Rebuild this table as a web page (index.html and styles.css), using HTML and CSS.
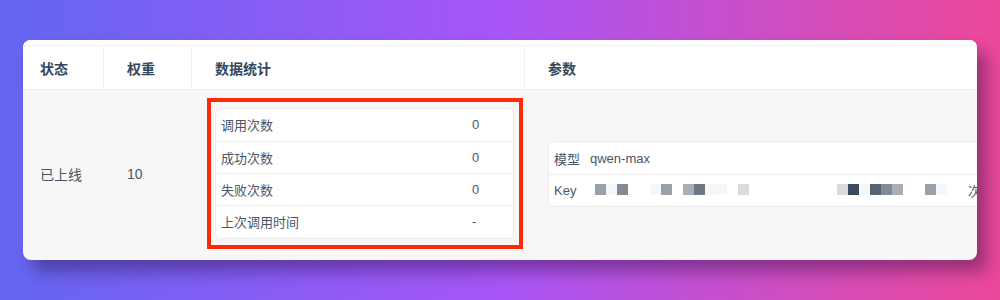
FILE: index.html
```html
<!DOCTYPE html>
<html lang="zh">
<head>
<meta charset="utf-8">
<link rel="stylesheet" href="styles.css">
</head>
<body>
<div class="card">
  <div class="thead">
    <div class="th sep">状态</div>
    <div class="th sep">权重</div>
    <div class="th sep">数据统计</div>
    <div class="th">参数</div>
  </div>
  <div class="trow">
    <div class="td plain">已上线</div>
    <div class="td plain">10</div>
    <div class="td">
      <div class="stats-wrap">
        <div class="stats">
          <div class="srow"><span class="lbl">调用次数</span><span class="val">0</span></div>
          <div class="srow"><span class="lbl">成功次数</span><span class="val">0</span></div>
          <div class="srow"><span class="lbl">失败次数</span><span class="val">0</span></div>
          <div class="srow"><span class="lbl">上次调用时间</span><span class="val">-</span></div>
        </div>
        <div class="highlight"></div>
      </div>
    </div>
    <div class="td">
      <div class="params">
        <div class="prow"><span class="plbl">模型</span><span class="pval">qwen-max</span></div>
        <div class="prow"><span class="plbl">Key</span>
          <span class="mosaic">
            <i class="c3"></i><i class="c1"></i><i class="c4"></i><i></i><i></i><i class="c1"></i><i class="c3"></i><i></i><i class="c2"></i><i class="c5"></i><i class="c1"></i><i class="c1"></i><i></i><i class="c6"></i><i></i><i></i><i></i><i></i><i></i><i></i><i></i><i></i><i class="c6"></i><i class="c8"></i><i class="c1"></i><i class="c7"></i><i class="c4"></i><i class="c2"></i><i></i><i></i><i class="c3"></i><i class="c1"></i>
          </span>
          <span class="tail">次</span>
        </div>
      </div>
    </div>
  </div>
</div>
</body>
</html>
```

FILE: styles.css
```css
* { box-sizing: border-box; }
html, body { margin: 0; height: 100%; }
body {
  width: 1000px;
  height: 300px;
  padding: 40px 23px;
  background: linear-gradient(90deg, #6366f1 0%, #a855f7 50%, #ec4899 100%);
  font-family: "Liberation Sans", "Noto Sans CJK SC", sans-serif;
  color: #4a5568;
  overflow: hidden;
}
.card {
  width: 954px;
  height: 220px;
  background: #f7f7f7;
  border-radius: 8px;
  overflow: hidden;
  box-shadow: 10px 12px 16px rgba(40, 12, 60, 0.4);
}
.thead {
  display: grid;
  grid-template-columns: 87px 88px 333px 1fr;
  height: 50px;
  background: #fff;
  border-top: 5px solid #fff;
  border-bottom: 1px solid #ebebeb;
}
.th {
  position: relative;
  display: flex;
  align-items: center;
  padding: 0 17px;
  font-size: 14px;
  font-weight: 700;
  color: #34475b;
  border-top: 1px solid #f1f1f1;
}
.th.sep::after {
  content: "";
  position: absolute;
  right: 6px;
  top: 1px;
  bottom: 1px;
  width: 1px;
  background: #f2f2f2;
}
.trow {
  display: grid;
  grid-template-columns: 87px 88px 333px 1fr;
  height: 170px;
}
.td {
  display: flex;
  align-items: center;
  padding: 0 17px;
  font-size: 14px;
  color: #4a5568;
  min-width: 0;
}
.td.plain { padding-bottom: 3px; }
.stats-wrap {
  position: relative;
  width: 100%;
  margin-top: -4px;
}
.stats {
  background: #fff;
  border: 1px solid #ececec;
  border-radius: 6px;
}
.srow {
  display: grid;
  grid-template-columns: 251px 1fr;
  height: 32.25px;
  align-items: center;
  border-top: 1px solid #ededed;
  font-size: 13px;
}
.srow:first-child { border-top: none; }
.lbl, .val { padding: 0 5px; }
.highlight {
  position: absolute;
  top: -10px;
  bottom: -10px;
  left: -8px;
  right: -9px;
  border: 4px solid #ff2a0a;
}
.params {
  width: 560px;
  flex: none;
  margin-top: -2px;
  background: #fff;
  border: 1px solid #ececec;
  border-radius: 6px;
  font-size: 13px;
}
.prow {
  display: flex;
  align-items: center;
  height: 32px;
  padding: 0 5px;
  border-top: 1px solid #ededed;
  white-space: nowrap;
}
.prow:first-child { border-top: none; }
.plbl { width: 36px; flex: none; }
.pval { color: #4a5568; }
.mosaic {
  display: flex;
  margin-left: 5px;
  margin-top: -3px;
}
.mosaic i {
  display: block;
  width: 11px;
  height: 11px;
  flex: none;
}
.mosaic .c1 { background: #f5f7f9; }
.mosaic .c2 { background: #a9aeb6; }
.mosaic .c3 { background: #99a0a9; }
.mosaic .c4 { background: #828a96; }
.mosaic .c5 { background: #6e7785; }
.mosaic .c6 { background: #d9dbdf; }
.mosaic .c7 { background: #566474; }
.mosaic .c8 { background: #3a4a60; }
.tail { margin-left: 21px; }
```
